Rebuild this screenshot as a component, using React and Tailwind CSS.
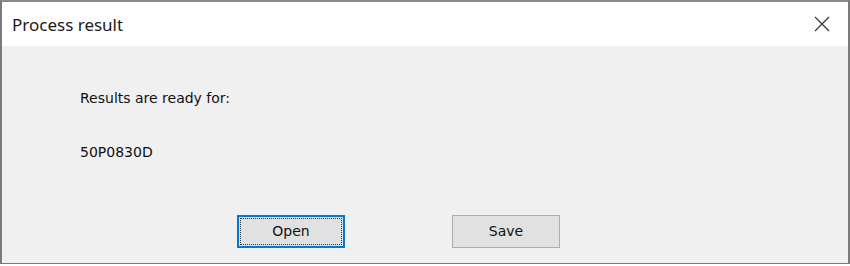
import React from 'react'

function CloseIcon() {
  return (
    <svg width="16" height="16" viewBox="0 0 16 16" className="block">
      <path d="M1 1 L15 15 M15 1 L1 15" stroke="#3c3c3c" strokeWidth="1.3" fill="none" />
    </svg>
  )
}

export default function App() {
  return (
    <div className="w-[850px] h-[266px] bg-white">
      <div className="w-[850px] h-[264px] border-2 border-b border-[#7a7a7a] border-t-[#8a8a8a] bg-[#f0f0f0] flex flex-col font-['Liberation_Sans',sans-serif]">
        {/* title bar */}
        <div className="h-[44px] bg-white flex items-center justify-between pl-[10px] pr-[18px]">
          <span className="text-[17px] text-[#1a1a1a] font-['Noto_Sans',sans-serif] mt-[2px]">Process result</span>
          <CloseIcon />
        </div>
        {/* body */}
        <div className="flex-1 flex flex-col pl-[78px] pt-[44px] text-[14px] text-[#111] font-['DejaVu_Sans',sans-serif]">
          <div className="leading-[17px]">Results are ready for:</div>
          <div className="leading-[17px] mt-[37px]">50P0830D</div>
        </div>
        <div className="flex pl-[235px] gap-[107px] pb-[15px]">
          <button className="w-[108px] h-[33px] border-2 border-[#0078d7] bg-[#e1e1e1] p-[1px] text-[14px] text-[#111] font-['DejaVu_Sans',sans-serif]">
            <span className="flex items-center justify-center w-full h-full border border-dotted border-[#333]">Open</span>
          </button>
          <button className="w-[108px] h-[33px] border border-[#adadad] bg-[#e1e1e1] text-[14px] text-[#111] font-['DejaVu_Sans',sans-serif]">
            Save
          </button>
        </div>
      </div>
    </div>
  )
}
